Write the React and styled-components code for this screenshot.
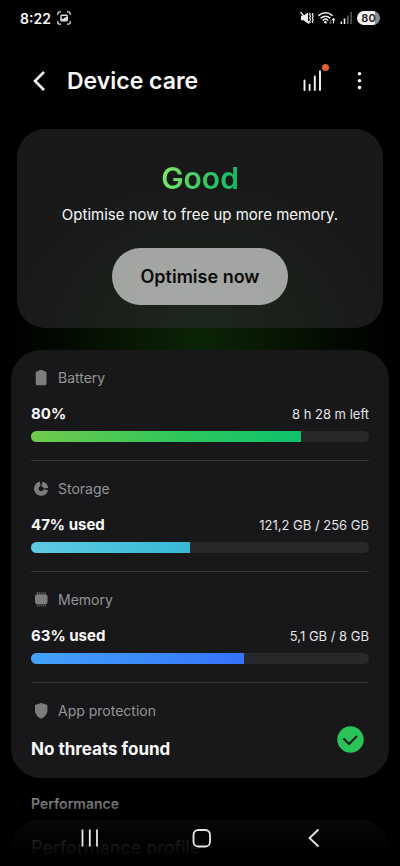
import React from 'react';
import styled, { createGlobalStyle } from 'styled-components';

const usage = [
  {
    id: 'battery',
    label: 'Battery',
    value: '80%',
    detail: '8 h 28 m left',
    percent: 80,
    colors: '#71ca4d, #2fc75a 55%, #0fc26c'
  },
  {
    id: 'storage',
    label: 'Storage',
    value: '47% used',
    detail: '121,2 GB / 256 GB',
    percent: 47,
    colors: '#5fcbe2, #38b8d6'
  },
  {
    id: 'memory',
    label: 'Memory',
    value: '63% used',
    detail: '5,1 GB / 8 GB',
    percent: 63,
    colors: '#44a2fb, #3573fa'
  }
];

const BatteryIcon = () => (
  <svg width="20" height="20" viewBox="0 0 20 20" fill="#7d7d7f" aria-hidden="true">
    <path d="M8.3 2h3.6l.9 1.300h1c1 0 1.700.7 1.700 1.700v10.500c0 1-.7 1.700-1.700 1.700H6.400c-1 0-1.700-.7-1.700-1.700V5c0-1 .7-1.700 1.700-1.700h1z" />
  </svg>
);

const StorageIcon = () => (
  <svg width="20" height="20" viewBox="0 0 20 20" fill="none" stroke="#7d7d7f" aria-hidden="true">
    <path d="M9.2 4.800a4.900 4.900 0 1 0 5.700 6" strokeWidth="4.600" />
    <path d="M11 4.900a4.900 4.900 0 0 1 3.900 4.300" strokeWidth="4.600" />
  </svg>
);

const MemoryIcon = () => (
  <svg width="20" height="20" viewBox="0 0 20 20" fill="#7d7d7f" aria-hidden="true">
    <rect x="4" y="4.500" width="12.500" height="9.500" rx="2" />
    <path
      d="M6.200 2v14.500M8.200 2v14.500M10.200 2v14.500M12.200 2v14.500M14.200 2v14.500"
      stroke="#7d7d7f"
      strokeWidth="0.800"
    />
  </svg>
);

const ShieldIcon = () => (
  <svg width="20" height="20" viewBox="0 0 20 20" fill="#7d7d7f" aria-hidden="true">
    <path d="M10.100 2l6.300 2v5.500c0 3.700-2.600 6.500-6.300 8-3.700-1.500-6.100-4.300-6.100-8V4z" />
  </svg>
);

const icons = {
  battery: <BatteryIcon />,
  storage: <StorageIcon />,
  memory: <MemoryIcon />
};

const StatusIcons = () => (
  <StatusGroup>
    {/* sound off, vibrate */}
    <svg width="14" height="14" viewBox="0 0 14 14" fill="none" stroke="#eee" aria-hidden="true">
      <path d="M1 4.800h2.400L8 1.500v11L3.400 9.300H1z" fill="#eee" stroke="none" />
      <path d="M.8 1.200l8.500 11.300" strokeWidth="1.400" />
      <path d="M10.300 2l-.7 1.500.9 1.700-.9 1.800.9 1.800-.9 1.700.7 1.500M13 2l-.7 1.500.9 1.700-.9 1.800.9 1.800-.9 1.700.7 1.500" strokeWidth="1.200" />
    </svg>
    <svg width="18" height="14" viewBox="0 0 18 14" fill="none" stroke="#eee" strokeLinecap="round" aria-hidden="true">
      <path d="M1 4.400a9.200 9.200 0 0 1 13 0M3.200 6.900a6.200 6.200 0 0 1 8.600 0M5.200 9.200a3.300 3.300 0 0 1 4.600 0" strokeWidth="1.500" />
      <circle cx="7.500" cy="11.300" r="1.300" fill="#eee" stroke="none" />
      <path d="M12.600 9v3.500M11.800 11.700l.8.900.8-.9" stroke="#777" strokeWidth="0.900" />
      <path d="M15.500 12V7.800M14.200 9l1.300-1.500L16.800 9" strokeWidth="1.100" />
    </svg>
    <svg width="13" height="14" viewBox="0 0 13 14" fill="#eee" aria-hidden="true">
      <rect x="0.500" y="10.500" width="1.600" height="2.500" />
      <rect x="3.700" y="7.500" width="1.600" height="5.500" />
      <rect x="7" y="4.500" width="1.600" height="8.500" fill="#666" />
      <rect x="10.300" y="1" width="1.600" height="12" fill="#555" />
    </svg>
    <BatteryBadge>80</BatteryBadge>
  </StatusGroup>
);

const UsageSection = ({ item }) => (
  <Section>
    <Label>
      {icons[item.id]}
      {item.label}
    </Label>
    <ValueRow>
      <Value>{item.value}</Value>
      <Detail>{item.detail}</Detail>
    </ValueRow>
    <Track role="progressbar" aria-label={item.label} aria-valuenow={item.percent}>
      <Fill $colors={item.colors} style={{ width: `${item.percent}%` }} />
    </Track>
  </Section>
);

export default function App() {
  return (
    <Screen>
      <GlobalStyle />
      <StatusBar>
        <StatusGroup>
          <Clock>8:22</Clock>
          <svg width="14" height="14" viewBox="0 0 14 14" fill="none" stroke="#ddd" strokeWidth="1.300" aria-hidden="true">
            <path d="M.8 4V2.500C.8 1.500 1.500.8 2.500.8H4M10 .8h1.500c1 0 1.700.7 1.700 1.700V4M13.200 10v1.500c0 1-.7 1.700-1.700 1.700H10M4 13.200H2.500c-1 0-1.700-.7-1.700-1.700V10" />
            <rect x="4" y="4.200" width="6.200" height="5.600" rx="0.800" strokeWidth="1.500" />
            <path d="M4.200 7.500l2 .5 1.500-1.500L10 6V9.800H4.200z" fill="#ddd" stroke="none" />
          </svg>
        </StatusGroup>
        <StatusIcons />
      </StatusBar>

      <Header>
        <IconButton type="button" aria-label="Navigate up">
          <svg width="24" height="24" viewBox="0 0 24 24" fill="none" stroke="#f5f5f5" strokeWidth="2.600" aria-hidden="true">
            <path d="M16 3L7 12l9 9" />
          </svg>
        </IconButton>
        <Title>Device care</Title>
        <IconButton type="button" aria-label="Usage report">
          <svg width="24" height="24" viewBox="0 0 24 24" fill="none" stroke="#f5f5f5" strokeWidth="1.900" strokeLinecap="round" aria-hidden="true">
            <path d="M3.500 11.500V21M8.600 15.800V21M13.800 7.500V21M19 2.200V21" />
          </svg>
          <Dot />
        </IconButton>
        <IconButton type="button" aria-label="More options">
          <svg width="24" height="24" viewBox="0 0 24 24" fill="#f5f5f5" aria-hidden="true">
            <circle cx="11.500" cy="4.800" r="1.800" />
            <circle cx="11.500" cy="11.700" r="1.800" />
            <circle cx="11.500" cy="18.600" r="1.800" />
          </svg>
        </IconButton>
      </Header>

      <Content>
        <Summary>
          <Status>Good</Status>
          <Hint>Optimise now to free up more memory.</Hint>
          <OptimiseButton type="button">Optimise now</OptimiseButton>
        </Summary>

        <Card>
          {usage.map((item) => (
            <UsageSection key={item.id} item={item} />
          ))}
          <ProtectionSection>
            <div>
              <Label>
                <ShieldIcon />
                App protection
              </Label>
              <ProtectionState>No threats found</ProtectionState>
            </div>
            <svg width="27" height="27" viewBox="0 0 27 27" aria-hidden="true">
              <circle cx="13.500" cy="13.500" r="13.200" fill="#28c458" />
              <path d="M6.500 12.500l5.500 5.500 8-8" fill="none" stroke="#171719" strokeWidth="2" />
            </svg>
          </ProtectionSection>
        </Card>

        <GroupTitle>Performance</GroupTitle>
        <Card>
          <ProfileRow href="#profile">Performance profile</ProfileRow>
        </Card>
      </Content>

      <NavBar>
        <NavButton type="button" aria-label="Recent apps">
          <svg width="24" height="24" viewBox="0 0 24 24" stroke="#e8e8e8" strokeWidth="1.800" aria-hidden="true">
            <path d="M5.500 3.500v17M12.800 3.500v17M20 3.500v17" />
          </svg>
        </NavButton>
        <NavButton type="button" aria-label="Home">
          <svg width="24" height="24" viewBox="0 0 24 24" fill="none" stroke="#e8e8e8" strokeWidth="1.800" aria-hidden="true">
            <rect x="4.500" y="4" width="16.500" height="16.500" rx="4.800" />
          </svg>
        </NavButton>
        <NavButton type="button" aria-label="Back">
          <svg width="24" height="24" viewBox="0 0 24 24" fill="none" stroke="#e8e8e8" strokeWidth="1.800" aria-hidden="true">
            <path d="M17.500 3.500L8.500 12l9 8.500" />
          </svg>
        </NavButton>
      </NavBar>
    </Screen>
  );
}

const GlobalStyle = createGlobalStyle`
  * {
    box-sizing: border-box;
  }

  body {
    margin: 0;
    background: #000;
    color: #f8f8f8;
    font-family: Inter, Roboto, sans-serif;
  }

  h1, h2, p {
    margin: 0;
  }

  button {
    border: none;
    padding: 0;
    font-family: inherit;
    cursor: pointer;
  }

  svg {
    display: block;
    flex-shrink: 0;
  }
`;

const Screen = styled.div`
  height: 100vh;
  overflow-y: auto;
  scrollbar-width: none;
`;

const StatusBar = styled.div`
  display: flex;
  align-items: center;
  justify-content: space-between;
  height: 36px;
  padding: 0 20px;
`;

const StatusGroup = styled.div`
  display: flex;
  align-items: center;
  gap: 4px;
`;

const Clock = styled.span`
  font-size: 14px;
  font-weight: 600;
  margin-right: 2px;
`;

const BatteryBadge = styled.span`
  width: 23px;
  border-radius: 8px;
  background: linear-gradient(90deg, #f2f2f2 80%, #8c8c8c 80%);
  color: #222;
  font-size: 11px;
  font-weight: 600;
  line-height: 14px;
  text-align: center;
`;

const Header = styled.header`
  display: flex;
  align-items: center;
  height: 90px;
  padding: 0 28px;
`;

const IconButton = styled.button`
  position: relative;
  background: none;

  & + & {
    margin-left: 23px;
  }
`;

const Title = styled.h1`
  flex: 1;
  padding-left: 15px;
  font-size: 23px;
  font-weight: 600;
`;

const Dot = styled.span`
  position: absolute;
  top: -5px;
  right: -4px;
  width: 7px;
  height: 7px;
  border-radius: 50%;
  background: #e2602a;
`;

const Content = styled.main`
  padding: 3px 11px 80px;
  background: radial-gradient(190px 160px at 50% 212px, #0b2506, #071603 40%, transparent) no-repeat;
`;

const Summary = styled.section`
  display: flex;
  flex-direction: column;
  align-items: center;
  margin: 0 6px 22px;
  padding: 29px 20px 23px;
  border-radius: 28px;
  background: rgba(41, 41, 44, 0.6);
`;

const Status = styled.h2`
  font-size: 30px;
  font-weight: 600;
  line-height: 40px;
  color: transparent;
  background: linear-gradient(100deg, #86e96c, #35c964 55%, #11b869);
  background-clip: text;
`;

const Hint = styled.p`
  margin: 7px 0 23px;
  font-size: 15px;
  line-height: 20px;
`;

const OptimiseButton = styled.button`
  padding: 0 29px;
  border-radius: 29px;
  background: rgba(255, 255, 255, 0.6);
  color: #0b0b0b;
  font-size: 18px;
  font-weight: 600;
  line-height: 57px;
`;

const Card = styled.section`
  padding: 0 20px;
  border-radius: 30px;
  background: #18181a;
`;

const Section = styled.div`
  padding: 18px 0;
  border-bottom: 1px solid #353537;
`;

const Label = styled.div`
  display: flex;
  align-items: center;
  gap: 7px;
  margin-bottom: 14px;
  color: #949496;
  font-size: 14px;
  line-height: 20px;
`;

const ValueRow = styled.div`
  display: flex;
  align-items: center;
  justify-content: space-between;
  line-height: 24px;
`;

const Value = styled.span`
  font-size: 15px;
  font-weight: 700;
`;

const Detail = styled.span`
  color: #e4e4e4;
  font-size: 13px;
`;

const Track = styled.div`
  height: 11px;
  margin-top: 5px;
  border-radius: 6px;
  background: #28282a;
  overflow: hidden;
`;

const Fill = styled.div`
  height: 100%;
  background: linear-gradient(90deg, ${(props) => props.$colors});
`;

const ProtectionSection = styled.div`
  display: flex;
  align-items: flex-end;
  justify-content: space-between;
  padding: 18px 5px 15px 0;

  > svg {
    margin-bottom: 10px;
  }
`;

const ProtectionState = styled.p`
  font-size: 17px;
  font-weight: 700;
  line-height: 28px;
`;

const GroupTitle = styled.h2`
  padding: 16px 20px 6px;
  color: #858587;
  font-size: 14px;
  font-weight: 600;
  line-height: 20px;
`;

const ProfileRow = styled.a`
  display: block;
  padding: 16px 0;
  color: #f8f8f8;
  font-size: 18px;
  line-height: 24px;
  text-decoration: none;
`;

const NavBar = styled.nav`
  position: fixed;
  bottom: 0;
  left: 0;
  right: 0;
  display: grid;
  grid-template-columns: repeat(3, 1fr);
  padding: 26px 31px 16px 33px;
  background: linear-gradient(transparent, rgba(0, 0, 0, 0.6) 30%, rgba(0, 0, 0, 0.85) 55%, #000 90%);
`;

const NavButton = styled.button`
  display: flex;
  justify-content: center;
  background: none;
`;
